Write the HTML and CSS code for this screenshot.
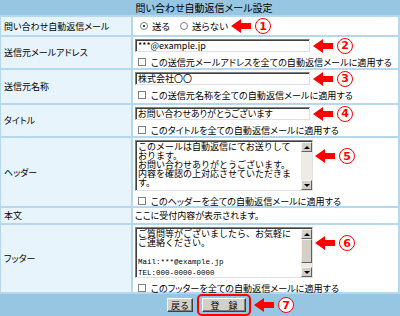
FILE: index.html
```html
<!DOCTYPE html>
<html lang="ja">
<head>
    <meta charset="UTF-8">
    <title>問い合わせ自動返信メール設定</title>
    <link rel="stylesheet" href="styles.css">
</head>
<body>
    <div class="panel">
        <div class="title">問い合わせ自動返信メール設定</div>

        <div class="label">問い合わせ自動返信メール</div>
        <div class="field row-center">
            <span class="radio on"></span><span class="rtext">送る</span>
            <span class="radio"></span><span class="rtext">送らない</span>
            <span class="note"><svg class="arrow" viewBox="0 0 20 14" width="20" height="14"><polygon points="0,7 10,0 10,4 20,4 20,10 10,10 10,14"/></svg><span class="num">1</span></span>
        </div>

        <div class="label">送信元メールアドレス</div>
        <div class="field">
            <div class="line">
                <input class="text" type="text" value="***@example.jp">
                <span class="note"><svg class="arrow" viewBox="0 0 20 14" width="20" height="14"><polygon points="0,7 10,0 10,4 20,4 20,10 10,10 10,14"/></svg><span class="num">2</span></span>
            </div>
            <div class="check"><span class="cb"></span>この送信元メールアドレスを全ての自動返信メールに適用する</div>
        </div>

        <div class="label">送信元名称</div>
        <div class="field">
            <div class="line">
                <input class="text" type="text" value="株式会社〇〇">
                <span class="note"><svg class="arrow" viewBox="0 0 20 14" width="20" height="14"><polygon points="0,7 10,0 10,4 20,4 20,10 10,10 10,14"/></svg><span class="num">3</span></span>
            </div>
            <div class="check"><span class="cb"></span>この送信元名称を全ての自動返信メールに適用する</div>
        </div>

        <div class="label">タイトル</div>
        <div class="field">
            <div class="line">
                <input class="text" type="text" value="お問い合わせありがとうございます">
                <span class="note"><svg class="arrow" viewBox="0 0 20 14" width="20" height="14"><polygon points="0,7 10,0 10,4 20,4 20,10 10,10 10,14"/></svg><span class="num">4</span></span>
            </div>
            <div class="check"><span class="cb"></span>このタイトルを全ての自動返信メールに適用する</div>
        </div>

        <div class="label">ヘッダー</div>
        <div class="field">
            <div class="line-top">
                <div class="ta">
                    <div class="ta-text">このメールは自動返信にてお送りして
おります。
お問い合わせありがとうございます。
内容を確認の上対応させていただきま
す。</div>
                    <div class="sb">
                        <span class="sb-btn"><span class="tri up"></span></span>
                        <span class="sb-track"></span>
                        <span class="sb-btn"><span class="tri down"></span></span>
                    </div>
                </div>
                <span class="note note-ta"><svg class="arrow" viewBox="0 0 20 14" width="20" height="14"><polygon points="0,7 10,0 10,4 20,4 20,10 10,10 10,14"/></svg><span class="num">5</span></span>
            </div>
            <div class="check"><span class="cb"></span>このヘッダーを全ての自動返信メールに適用する</div>
        </div>

        <div class="label">本文</div>
        <div class="field row-center">ここに受付内容が表示されます。</div>

        <div class="label">フッター</div>
        <div class="field">
            <div class="line-top">
                <div class="ta">
                    <div class="ta-text">ご質問等がございましたら、お気軽に
ご連絡ください。

<span class="hw">Mail:***@example.jp</span>
<span class="hw">TEL:000-0000-0000</span></div>
                    <div class="sb">
                        <span class="sb-btn"><span class="tri up"></span></span>
                        <span class="sb-track"><span class="sb-thumb"></span></span>
                        <span class="sb-btn"><span class="tri down"></span></span>
                    </div>
                </div>
                <span class="note note-ta"><svg class="arrow" viewBox="0 0 20 14" width="20" height="14"><polygon points="0,7 10,0 10,4 20,4 20,10 10,10 10,14"/></svg><span class="num">6</span></span>
            </div>
            <div class="check"><span class="cb"></span>このフッターを全ての自動返信メールに適用する</div>
        </div>

        <div class="foot">
            <button class="btn back">戻る</button>
            <span class="hl"><button class="btn save">登　録</button></span>
            <span class="note"><svg class="arrow" viewBox="0 0 20 14" width="20" height="14"><polygon points="0,7 10,0 10,4 20,4 20,10 10,10 10,14"/></svg><span class="num">7</span></span>
        </div>
    </div>
</body>
</html>
```

FILE: styles.css
```css
* {
    box-sizing: border-box;
}
body {
    margin: 0;
    background: #fff;
    color: #000;
    font-family: "Noto Sans CJK JP", sans-serif;
    font-size: 9px;
    font-feature-settings: "palt";
    overflow: hidden;
}
.panel {
    display: grid;
    grid-template-columns: 130px 1fr;
    grid-template-rows: 15px 18px 31px 33px 31px 68px 15px 67px 22px;
    gap: 2px;
    width: 400px;
    height: 316px;
    padding: 0 2px 0 1px;
    background: #b5d8ee;
}
.title, .foot {
    grid-column: 1 / -1;
    margin: 0 -2px 0 -1px;
    background: #97c6e3;
}
.title {
    display: flex;
    align-items: center;
    justify-content: center;
    padding-left: 8px;
    font-size: 10px;
}
.label {
    display: flex;
    align-items: center;
    padding-left: 3px;
    background: #e8f4fc;
}
.field {
    background: #fff;
    padding: 2px 0 0 2px;
}
.row-center {
    display: flex;
    align-items: center;
    padding-top: 0;
}

/* radio */
.radio {
    width: 8px;
    height: 8px;
    margin: 0 4px 0 5px;
    border: 1px solid #808080;
    border-radius: 50%;
    background: #fff;
    position: relative;
}
.radio.on::after {
    content: "";
    position: absolute;
    left: 2px;
    top: 2px;
    width: 2px;
    height: 2px;
    border-radius: 50%;
    background: #000;
}
.rtext {
    margin-right: 5px;
    font-size: 9.5px;
}
.rtext + .note {
    margin-left: -2px;
}

/* inputs */
.line {
    display: flex;
    align-items: center;
    height: 13px;
}
.line-top {
    display: flex;
    align-items: flex-start;
}
.text {
    width: 175px;
    height: 13px;
    margin: 0;
    padding: 0 2px;
    border: 1px solid;
    border-color: #808080 #e0e0e0 #e0e0e0 #808080;
    box-shadow: inset 1px 1px 0 #404040;
    font-family: "Noto Sans CJK JP", sans-serif;
    font-size: 9px;
    font-feature-settings: "palt";
    line-height: 11px;
    color: #000;
    outline: none;
}
.check {
    display: flex;
    align-items: center;
    height: 12px;
    margin-top: 4px;
    font-size: 9.1px;
    white-space: nowrap;
}
.cb {
    flex: none;
    width: 8px;
    height: 8px;
    margin: 0 5px 0 3px;
    border: 1px solid #808080;
    background: #fff;
}

/* textarea */
.ta {
    display: flex;
    width: 178px;
    height: 51px;
    border: 1px solid;
    border-color: #808080 #e0e0e0 #e0e0e0 #808080;
    box-shadow: inset 1px 1px 0 #404040;
}
.ta-text {
    flex: 1;
    padding: 1px 0 0 2px;
    overflow: hidden;
    white-space: pre;
    font-feature-settings: normal;
    line-height: 9px;
}
.hw {
    font-family: "Liberation Mono", monospace;
    font-size: 7.5px;
}
.sb {
    display: flex;
    flex-direction: column;
    width: 11px;
    margin: 1px 0 0;
    background: #ecebe6;
}
.sb-btn, .sb-thumb {
    display: flex;
    align-items: center;
    justify-content: center;
    height: 10px;
    background: #d4d0c8;
    border: 1px solid;
    border-color: #f4f4f4 #606060 #606060 #f4f4f4;
}
.sb-track {
    flex: 1;
}
.sb-thumb {
    height: 24px;
}
.tri {
    width: 0;
    height: 0;
    border-left: 3px solid transparent;
    border-right: 3px solid transparent;
}
.tri.up {
    border-bottom: 3px solid #000;
}
.tri.down {
    border-top: 3px solid #000;
}

/* annotations */
.note {
    display: inline-flex;
    align-items: center;
    gap: 4px;
    margin-left: 3px;
}
.note-ta {
    margin-top: 8px;
    margin-left: 2px;
}
.arrow {
    fill: #ff0000;
}
.num {
    display: flex;
    align-items: center;
    justify-content: center;
    width: 16px;
    height: 16px;
    border: 1.5px solid #ff0000;
    border-radius: 50%;
    background: #fff;
    color: #ff0000;
    font-family: "DejaVu Sans", sans-serif;
    font-weight: bold;
    font-size: 11px;
}

/* footer */
.foot {
    display: flex;
    align-items: center;
    padding-left: 167px;
}
.btn {
    height: 14px;
    margin: 0;
    padding: 0;
    background: #d4d0c8;
    border: 1px solid;
    border-color: #fff #404040 #404040 #fff;
    box-shadow: inset -1px -1px 0 #808080;
    font-family: "Noto Sans CJK JP", sans-serif;
    font-size: 9px;
    line-height: 11px;
    color: #000;
}
.back {
    width: 26px;
}
.save {
    width: 44px;
}
.hl {
    display: flex;
    align-items: center;
    height: 22px;
    margin-left: 4px;
    padding: 0 3px;
    border: 2px solid #ff0000;
    border-radius: 5px;
}
```
